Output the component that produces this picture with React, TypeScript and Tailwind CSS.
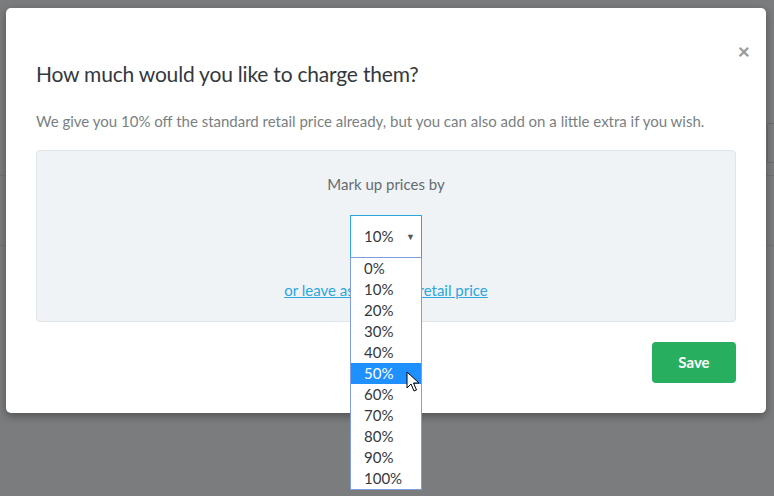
import React from "react";

const options = ["0%", "10%", "20%", "30%", "40%", "50%", "60%", "70%", "80%", "90%", "100%"];

export default function App() {
  return (
    <div
      className="relative w-[774px] h-[496px] overflow-hidden bg-[#7b7c7e] pl-[6px] pt-[8px]"
      style={{ fontFamily: "Lato, 'Liberation Sans', sans-serif" }}
    >
      {/* faint underlying page lines */}
      <div className="absolute left-0 right-0 top-[175px] h-px bg-[#727375]" />
      <div className="absolute left-0 right-0 top-[245px] h-px bg-[#727375]" />
      <div className="absolute left-[767px] top-[123px] w-[20px] h-[40px] border border-[#6c6d6f] rounded-[2px]" />

      {/* modal */}
      <div className="relative w-[760px] h-[405px] bg-white rounded-[5px] shadow-[0_3px_9px_rgba(0,0,0,0.35)] px-[30px] pt-[52px]">
        <button className="absolute right-[16px] top-[32px] text-[#9a9a9a] text-[21px] font-black leading-none">
          ×
        </button>
        <h2 className="text-[21px] leading-[28px] text-[#333840] tracking-[-0.2px]">
          How much would you like to charge them?
        </h2>
        <p className="mt-[23px] text-[15px] leading-[20px] text-[#7a7f85]">
          We give you 10% off the standard retail price already, but you can also add on a little extra if you wish.
        </p>
        <div className="mt-[19px] h-[172px] bg-[#f0f3f6] border border-[#e0e5e9] rounded-[4px] flex flex-col items-center pt-[23px]">
          <div className="text-[15px] leading-[20px] text-[#666b70]">Mark up prices by</div>
          <div className="mt-[21px] w-[72px] h-[43px] bg-white border border-[#2ba6de] flex items-center justify-between pl-[13px] pr-[6px] text-[15px] text-[#333840]">
            <span>10%</span>
            <span className="text-[9px] text-[#555]">▼</span>
          </div>
          <a className="mt-[22px] text-[15px] leading-[20px] text-[#2ba6de] underline">
            or leave as standard retail price
          </a>
        </div>
        <div className="flex justify-end mt-[20px]">
          <button className="w-[84px] h-[41px] bg-[#27ae5f] rounded-[4px] text-white text-[15px] font-bold">
            Save
          </button>
        </div>
      </div>

      {/* dropdown list */}
      <div className="absolute left-[350px] top-[257px] w-[72px] bg-white border border-[#7f9ddb] flex flex-col">
        {options.map((o) => (
          <div
            key={o}
            className={`h-[21px] leading-[21px] pl-[13px] text-[15px] ${
              o === "50%" ? "bg-[#1e90ff] text-white" : "text-[#333840]"
            }`}
          >
            {o}
          </div>
        ))}
      </div>

      {/* cursor */}
      <svg className="absolute left-[406px] top-[371px]" width="14" height="22" viewBox="0 0 14 22">
        <path d="M1 1 L1 17 L5 13 L8 20 L10.5 19 L7.5 12 L13 12 Z" fill="white" stroke="black" strokeWidth="1" strokeLinejoin="round" />
      </svg>
    </div>
  );
}
